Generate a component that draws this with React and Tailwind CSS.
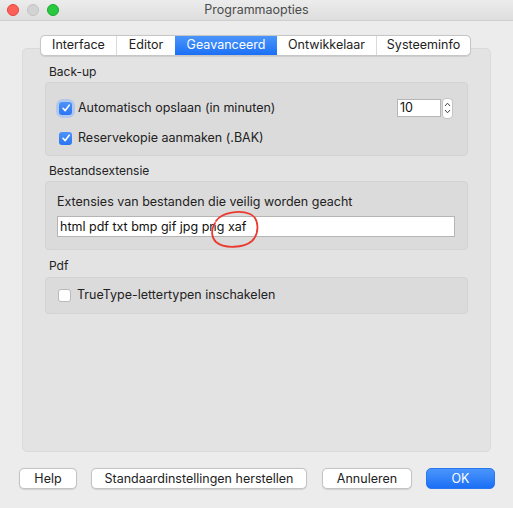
import React from 'react';

const FONT = { fontFamily: 'Inter, "Liberation Sans", sans-serif' };

const TABS = [
  { label: 'Interface', w: 'w-[75px]' },
  { label: 'Editor', w: 'w-[59px]' },
  { label: 'Geavanceerd', w: 'w-[102px]', active: true },
  { label: 'Ontwikkelaar', w: 'w-[99px]' },
  { label: 'Systeeminfo', w: 'w-[94px]' },
];

const Check = () => (
  <svg width="10" height="10" viewBox="0 0 10 10" fill="none">
    <path d="M2 5.3 L4.2 7.6 L8.2 2.2" stroke="white" strokeWidth="1.6" strokeLinecap="round" strokeLinejoin="round" />
  </svg>
);

const Checkbox = ({ checked, focus }) => (
  <div className={`flex items-center justify-center rounded-[4px] ${focus ? 'ring-[3px] ring-[#9fc2f5]/70' : ''}`}>
    {checked ? (
      <div className="w-[13px] h-[13px] rounded-[3px] bg-gradient-to-b from-[#4d93f8] to-[#2a74f4] flex items-center justify-center">
        <Check />
      </div>
    ) : (
      <div className="w-[13px] h-[13px] rounded-[3px] bg-white border border-[#b9b9b9]" />
    )}
  </div>
);

const SectionLabel = ({ children, className = '' }) => (
  <div className={`h-[16px] leading-[16px] pl-[4px] text-[12px] text-[#222] ${className}`}>{children}</div>
);

const Button = ({ children, w, primary }) => (
  <button
    className={`${w} h-[21px] rounded-[5px] text-[12.5px] leading-[19px] ${
      primary
        ? 'bg-gradient-to-b from-[#4a95fb] to-[#1a6ff5] text-white border border-[#2a78f0]'
        : 'bg-white text-[#222] border border-[#c4c4c4] shadow-[0_0.5px_1px_rgba(0,0,0,0.12)]'
    }`}
  >
    {children}
  </button>
);

export default function App() {
  return (
    <div className="w-[513px] h-[508px] bg-[#ececec] flex flex-col overflow-hidden" style={FONT}>
      {/* title bar */}
      <div className="relative h-[21px] bg-gradient-to-b from-[#ececec] to-[#dedede] border-b border-[#cfcfcf] flex items-center justify-center">
        <div className="absolute left-[7px] top-[4px] flex gap-[8px]">
          <div className="w-[12px] h-[12px] rounded-full bg-[#fe5f57] border border-[#e2463f]" />
          <div className="w-[12px] h-[12px] rounded-full bg-[#d3d3d3] border border-[#c2c2c2]" />
          <div className="w-[12px] h-[12px] rounded-full bg-[#28c840] border border-[#1aab29]" />
        </div>
        <span className="text-[12.5px] text-[#4b4b4b]">Programmaopties</span>
      </div>

      {/* tabs */}
      <div className="relative z-10 mt-[14px] ml-[40px] flex h-[21px] w-max rounded-[5px] border border-[#c6c6c6] bg-white overflow-hidden shadow-[0_0.5px_1px_rgba(0,0,0,0.1)]">
        {TABS.map((t, i) => (
          <div
            key={t.label}
            className={`${t.w} flex items-center justify-center text-[12.5px] ${
              t.active
                ? 'bg-gradient-to-b from-[#4a95fb] to-[#1a6ff5] text-white'
                : 'text-[#222]'
            } ${i > 0 && !t.active && !TABS[i - 1].active ? 'border-l border-[#dadada]' : ''}`}
          >
            {t.label}
          </div>
        ))}
      </div>

      {/* tab pane */}
      <div className="mx-[22px] mt-[-8px] h-[404px] rounded-[5px] bg-[#e3e3e3] border border-[#dadada] px-[22px] pt-[15px]">
        <SectionLabel>Back-up</SectionLabel>
        <div className="mt-[2px] h-[74px] rounded-[4px] bg-[#dbdbdb] border border-[#d3d3d3] pl-[13px] pr-[14px] pt-[15px] flex flex-col gap-[10px]">
          <div className="h-[20px] flex items-center">
            <Checkbox checked focus />
            <span className="ml-[6px] text-[12.5px] text-[#222]">Automatisch opslaan (in minuten)</span>
            <div className="ml-auto flex items-center gap-[1px]">
              <div className="w-[44px] h-[18px] bg-white border border-[#b5b5b5] text-[12.5px] leading-[16px] pl-[2px] text-[#111]">10</div>
              <div className="w-[11px] h-[21px] rounded-[4px] bg-white border border-[#c4c4c4] flex flex-col items-center justify-center gap-[2px]">
                <svg width="7" height="5" viewBox="0 0 7 5"><path d="M1 4 L3.5 1.2 L6 4" stroke="#444" strokeWidth="1" fill="none" /></svg>
                <svg width="7" height="5" viewBox="0 0 7 5"><path d="M1 1 L3.5 3.8 L6 1" stroke="#444" strokeWidth="1" fill="none" /></svg>
              </div>
            </div>
          </div>
          <div className="h-[20px] flex items-center">
            <Checkbox checked />
            <span className="ml-[6px] text-[12.5px] text-[#222]">Reservekopie aanmaken (.BAK)</span>
          </div>
        </div>

        <SectionLabel className="mt-[7px]">Bestandsextensie</SectionLabel>
        <div className="mt-[2px] h-[69px] rounded-[4px] bg-[#dbdbdb] border border-[#d3d3d3] pl-[11px] pr-[12px] pt-[12px]">
          <div className="h-[16px] leading-[16px] text-[12.5px] text-[#222]">Extensies van bestanden die veilig worden geacht</div>
          <div className="relative mt-[6px] h-[21px] bg-white border border-[#b5b5b5] text-[12.5px] leading-[19px] pl-[2px] text-[#111]">
            html pdf txt bmp gif jpg png xaf
            <svg className="absolute left-[152px] top-[-8px]" width="50" height="42" viewBox="0 0 50 42" fill="none">
              <path
                d="M6 12 C 12 3, 30 1, 40 5 C 49 9, 50 24, 42 32 C 34 39, 14 40, 6 33 C 1 28, 1 20, 5 14"
                stroke="#ea3a2f"
                strokeWidth="1.8"
                strokeLinecap="round"
              />
            </svg>
          </div>
        </div>

        <SectionLabel className="mt-[8px]">Pdf</SectionLabel>
        <div className="mt-[3px] h-[37px] rounded-[4px] bg-[#dbdbdb] border border-[#d3d3d3] pl-[12px] flex items-center">
          <Checkbox />
          <span className="ml-[6px] text-[12.5px] text-[#222]">TrueType-lettertypen inschakelen</span>
        </div>
      </div>

      {/* buttons */}
      <div className="mt-[16px] flex items-center pl-[19px]">
        <Button w="w-[58px]">Help</Button>
        <div className="w-[14px]" />
        <Button w="w-[216px]">Standaardinstellingen herstellen</Button>
        <div className="w-[15px]" />
        <Button w="w-[90px]">Annuleren</Button>
        <div className="w-[14px]" />
        <Button w="w-[69px]" primary>OK</Button>
      </div>
    </div>
  );
}
